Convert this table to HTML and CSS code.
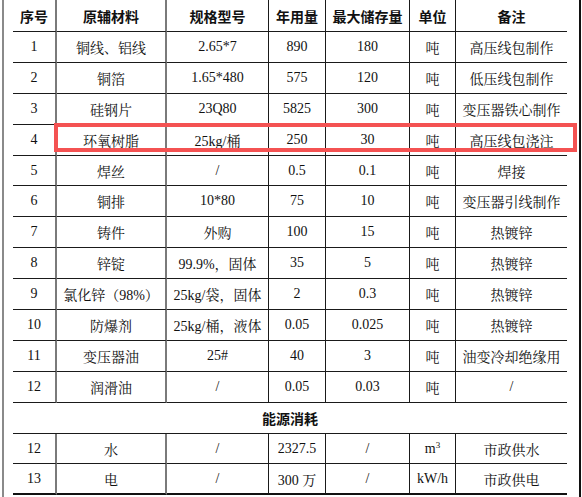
FILE: index.html
```html
<!DOCTYPE html>
<html lang="zh-CN">
<head>
<meta charset="utf-8">
<title>原辅材料表</title>
<link rel="stylesheet" href="styles.css">
</head>
<body>
<div class="page">
  <table class="mat">
    <colgroup>
      <col class="c1"><col class="c2"><col class="c3"><col class="c4"><col class="c5"><col class="c6"><col class="c7">
    </colgroup>
    <thead>
      <tr class="head">
        <th class="g">序号</th><th class="g">原辅材料</th><th>规格型号</th><th>年用量</th><th>最大储存量</th><th>单位</th><th class="last">备注</th>
      </tr>
    </thead>
    <tbody>
      <tr><td class="g">1</td><td class="g">铜线、铝线</td><td>2.65*7</td><td>890</td><td>180</td><td>吨</td><td class="last">高压线包制作</td></tr>
      <tr><td class="g">2</td><td class="g">铜箔</td><td>1.65*480</td><td>575</td><td>120</td><td>吨</td><td class="last">低压线包制作</td></tr>
      <tr><td class="g">3</td><td class="g">硅钢片</td><td>23Q80</td><td>5825</td><td>300</td><td>吨</td><td class="last">变压器铁心制作</td></tr>
      <tr><td class="g">4</td><td class="g">环氧树脂</td><td>25kg/桶</td><td>250</td><td>30</td><td>吨</td><td class="last">高压线包浇注</td></tr>
      <tr><td class="g">5</td><td class="g">焊丝</td><td>/</td><td>0.5</td><td>0.1</td><td>吨</td><td class="last">焊接</td></tr>
      <tr><td class="g">6</td><td class="g">铜排</td><td>10*80</td><td>75</td><td>10</td><td>吨</td><td class="last">变压器引线制作</td></tr>
      <tr><td class="g">7</td><td class="g">铸件</td><td>外购</td><td>100</td><td>15</td><td>吨</td><td class="last">热镀锌</td></tr>
      <tr><td class="g">8</td><td class="g">锌锭</td><td>99.9%，固体</td><td>35</td><td>5</td><td>吨</td><td class="last">热镀锌</td></tr>
      <tr><td class="g">9</td><td class="g">氯化锌（98%）</td><td>25kg/袋，固体</td><td>2</td><td>0.3</td><td>吨</td><td class="last">热镀锌</td></tr>
      <tr><td class="g">10</td><td class="g">防爆剂</td><td>25kg/桶，液体</td><td>0.05</td><td>0.025</td><td>吨</td><td class="last">热镀锌</td></tr>
      <tr><td class="g">11</td><td class="g">变压器油</td><td>25#</td><td>40</td><td>3</td><td>吨</td><td class="last">油变冷却绝缘用</td></tr>
      <tr><td class="g">12</td><td class="g">润滑油</td><td>/</td><td>0.05</td><td>0.03</td><td>吨</td><td class="last">/</td></tr>
      <tr class="section"><td colspan="7" class="last">能源消耗</td></tr>
      <tr><td class="g">12</td><td class="g">水</td><td>/</td><td>2327.5</td><td>/</td><td>m<sup>3</sup></td><td class="last">市政供水</td></tr>
      <tr class="final"><td class="g">13</td><td class="g">电</td><td>/</td><td>300 万</td><td>/</td><td>kW/h</td><td class="last">市政供电</td></tr>
    </tbody>
  </table>
  <div class="highlight"></div>
</div>
</body>
</html>
```

FILE: styles.css
```css
html, body {
  margin: 0;
  padding: 0;
  background: #ffffff;
}

.page {
  position: relative;
  box-sizing: border-box;
  width: 579px;
  height: 497px;
  margin-left: 2px;
  padding-left: 9px;
  padding-right: 10px;
  border-left: 2px solid #8a8a8a;
  border-right: 2px solid #111111;
  overflow: hidden;
}

.mat {
  width: 554px;
  table-layout: fixed;
  border-collapse: separate;
  border-spacing: 0;
  font-family: "Liberation Serif", "Noto Serif CJK SC", "Noto Sans CJK SC", serif;
  font-size: 14px;
  color: #111111;
}

.c1 { width: 44px; }
.c2 { width: 110px; }
.c3 { width: 102px; }
.c4 { width: 57px; }
.c5 { width: 84px; }
.c6 { width: 46px; }
.c7 { width: 111px; }

.mat th,
.mat td {
  box-sizing: border-box;
  padding: 0;
  text-align: center;
  vertical-align: middle;
  white-space: nowrap;
  border-bottom: 1px solid #1a1a1a;
  border-right: 1px solid #1a1a1a;
  font-weight: normal;
}

.mat .g {
  border-right: 2px solid #7a7a7a;
}

.mat .last {
  border-right: none;
}

.head th {
  height: 32px;
  font-family: "Noto Sans CJK SC", sans-serif;
  font-weight: bold;
  font-size: 14px;
  color: #111111;
}

.mat tbody td {
  height: 30.9px;
}

.section td {
  font-family: "Noto Sans CJK SC", sans-serif;
  font-weight: bold;
}

.final td {
  border-bottom: 2px solid #111111;
}

.mat sup {
  font-size: 9px;
  line-height: 0;
  vertical-align: 5px;
}

.highlight {
  position: absolute;
  left: 50px;
  top: 123px;
  width: 523px;
  height: 29px;
  box-sizing: border-box;
  border: 4px solid #f45252;
}
```
